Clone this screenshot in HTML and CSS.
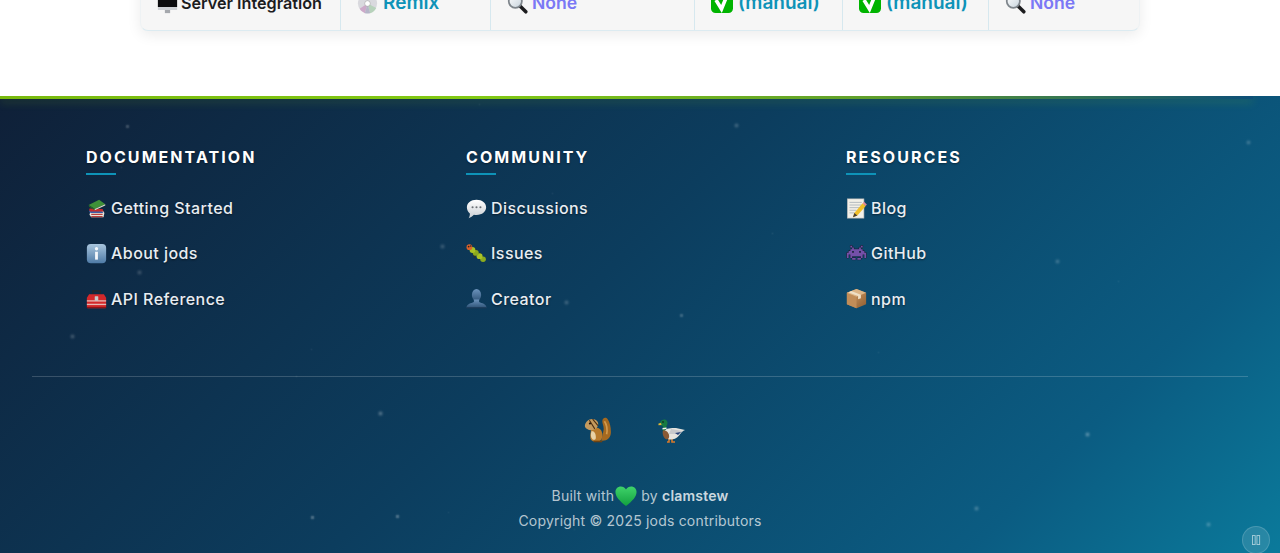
FILE: index.html
```html
<!DOCTYPE html>
<html lang="en">
<head>
<meta charset="utf-8">
<title>jods</title>
<link rel="stylesheet" href="styles.css">
</head>
<body>
<svg class="sprites" aria-hidden="true">
  <defs>
    <linearGradient id="g-info" x1="0" y1="0" x2="0" y2="1"><stop offset="0" stop-color="#a9c6de"/><stop offset="1" stop-color="#4f7ba6"/></linearGradient>
    <linearGradient id="g-bust" x1="0" y1="0" x2="0" y2="1"><stop offset="0" stop-color="#6d94bd"/><stop offset="1" stop-color="#2f5478"/></linearGradient>
    <linearGradient id="g-bubble" x1="0" y1="0" x2="0" y2="1"><stop offset="0" stop-color="#ffffff"/><stop offset="1" stop-color="#c9ced3"/></linearGradient>
    <linearGradient id="g-box" x1="0" y1="0" x2="1" y2="1"><stop offset="0" stop-color="#d9a66f"/><stop offset="1" stop-color="#8f5d30"/></linearGradient>
    <linearGradient id="g-heart" x1="0" y1="0" x2="0" y2="1"><stop offset="0" stop-color="#3fd36a"/><stop offset="1" stop-color="#12a03e"/></linearGradient>
    <linearGradient id="g-lens" x1="0" y1="0" x2="1" y2="1"><stop offset="0" stop-color="#ffffff"/><stop offset="1" stop-color="#c7d3dc"/></linearGradient>
  </defs>
  <symbol id="i-monitor" viewBox="0 0 24 24"><rect x="1" y="1" width="22" height="15" fill="#0c0c0e"/><rect x="1" y="16" width="22" height="3.4" fill="#cfd2d6"/><rect x="9" y="19.4" width="6" height="3.6" fill="#a5a8ad"/></symbol>
  <symbol id="i-disc" viewBox="0 0 24 24"><circle cx="12" cy="12" r="11" fill="#d9d9de"/><path d="M12 12 3 18a11 11 0 0 0 6 5z" fill="#cda9c9"/><path d="M12 12 22 17a11 11 0 0 1-7 6z" fill="#b7d2bb"/><path d="M12 12 9 23a11 11 0 0 0 6 0z" fill="#b5b5c8"/><circle cx="12" cy="12" r="3.2" fill="#fff" stroke="#999" stroke-width=".6"/></symbol>
  <symbol id="i-search" viewBox="0 0 24 24"><path d="M14 14l7.5 7.5" stroke="#1c1c1e" stroke-width="4" stroke-linecap="round"/><circle cx="9.5" cy="9.5" r="7.5" fill="url(#g-lens)" stroke="#7e858b" stroke-width="2"/></symbol>
  <symbol id="i-check" viewBox="1 1 22 22"><rect x="1" y="1" width="22" height="22" rx="4.5" fill="#00b400"/><path d="M6 10l5.5 9L18 3" fill="none" stroke="#fff" stroke-width="3.6"/></symbol>
  <symbol id="i-books" viewBox="0 0 24 24"><path d="M5 15h15l1 2-1 5H6l-2-3z" fill="#e9e4da"/><path d="M4 14l14 1 2 2H6c-2 0-3-1-2-3z" fill="#3a5ea8"/><path d="M4 12l15 .5 1 3H7c-3 0-4-1-3-3.500z" fill="#c22a2a"/><path d="M6 18h13v1.500H6zM6 20.500h13V22H6z" fill="#b5403f"/><path d="M3 8l12-6 7 5-12 5.500z" fill="#3f9138"/><path d="M3 8l7 4.500V14L3.500 10z" fill="#25662a"/><path d="M10 12.500l12-5.500v1.600L10 14z" fill="#d8dcc8"/></symbol>
  <symbol id="i-info" viewBox="0 0 24 24"><rect x="1" y="1" width="22" height="22" rx="4.500" fill="url(#g-info)"/><rect x="10.400" y="10" width="3.200" height="9" fill="#f4f8fb"/><circle cx="12" cy="6.600" r="1.900" fill="#f4f8fb"/></symbol>
  <symbol id="i-toolbox" viewBox="0 0 24 24"><path d="M8 7V3.500h8V7" fill="none" stroke="#27272a" stroke-width="1.600"/><path d="M3.500 7h17L23 11v11a1 1 0 0 1-1 1H2a1 1 0 0 1-1-1V11z" fill="#d4282a"/><rect x="1" y="14" width="22" height="1.500" fill="#e6b9b4"/><rect x="1" y="18" width="22" height="1.500" fill="#e6b9b4"/><rect x="10" y="9.500" width="4" height="5" rx=".6" fill="#c9c9c9"/><rect x="1" y="21.600" width="22" height="1.400" fill="#8c1416"/></symbol>
  <symbol id="i-bubble" viewBox="0 0 24 24"><path d="M12 2c6.500 0 11 3.700 11 8.700s-4.500 8.800-11 8.800c-1 0-2 0-3-.3C7.500 21 5.500 22.500 3 23c1-1.400 1.500-3 1.400-5.300C2.300 16 1 13.600 1 10.700 1 5.700 5.500 2 12 2z" fill="url(#g-bubble)"/><circle cx="7.500" cy="10.500" r="1.200" fill="#6b7075"/><circle cx="12" cy="10.500" r="1.200" fill="#6b7075"/><circle cx="16.500" cy="10.500" r="1.200" fill="#6b7075"/></symbol>
  <symbol id="i-bug" viewBox="0 0 24 24"><path d="M7 8l3 9M11 7l4 10M16 11l4 9" stroke="#33311c" stroke-width="1.400"/><circle cx="19.500" cy="18.500" r="3.200" fill="#8cab1e"/><circle cx="15.500" cy="15" r="3.400" fill="#a9c326"/><circle cx="11.200" cy="11.300" r="3.400" fill="#8cab1e"/><circle cx="7.400" cy="8" r="3.300" fill="#a9c326"/><circle cx="3.900" cy="4.800" r="3.300" fill="#d9622b"/><circle cx="3" cy="4" r="1" fill="#222"/><circle cx="5.500" cy="3.500" r=".9" fill="#222"/></symbol>
  <symbol id="i-bust" viewBox="0 0 24 24"><ellipse cx="12" cy="8" rx="5.300" ry="7" fill="url(#g-bust)"/><path d="M9 13h6v3c3 1.500 8 2 8.500 6.500H.5C1 18 6 17.500 9 16z" fill="url(#g-bust)"/><rect x=".5" y="22" width="23" height="1.300" fill="#1d3a57"/></symbol>
  <symbol id="i-memo" viewBox="0 0 24 24"><rect x="1.500" y="1" width="19" height="22" fill="#f2f0e8" stroke="#b4b6b4" stroke-width=".7"/><path d="M4 5h14M4 8h14M4 11h12M4 14h8M4 17h6" stroke="#b3b9be" stroke-width="1.100"/><path d="M8 22l1.500-5L19 6l3.500 3-9.500 11z" fill="#f0bf2a"/><path d="M19 6l1.500-1.700 3.300 3-1.300 1.700z" fill="#e78c9a"/><path d="M8 22l1.500-5 3.500 3z" fill="#4a4033"/></symbol>
  <symbol id="i-alien" viewBox="-.5 -1.500 12 12"><path d="M2 0h1v1H2zM8 0h1v1H8zM3 1h1v1H3zM7 1h1v1H7zM2 2h7v1H2zM1 3h2v1H1zM4 3h3v1H4zM8 3h2v1H8zM0 4h11v1H0zM0 5h1v2H0zM2 5h7v1H2zM2 6h1v1H2zM8 6h1v1H8zM10 5h1v2h-1zM3 7h2v1H3zM6 7h2v1H6z" fill="#7450a8" stroke="#1e1a2c" stroke-width=".5" paint-order="stroke"/></symbol>
  <symbol id="i-box" viewBox="0 0 24 24"><path d="M12 1l11 4.500v13L12 23 1 18.500v-13z" fill="url(#g-box)"/><path d="M1 5.500L12 10v13L1 18.500z" fill="#c18d58"/><path d="M1 5.500L12 1l11 4.500L12 10z" fill="#dcb587"/><path d="M6 3.300l11 4.500v4l-3.200 1V9.200L3 5z" fill="#efe0c6"/></symbol>
  <symbol id="i-chipmunk" viewBox="1 2 26 26"><path d="M17 24c5 .5 9-2 9-8 0-5-1-9-3-12-2-2.500-5-1-5 2 0 3 2 5 1 9z" fill="#a5691f"/><path d="M20 6c2 3 3 7 2 12" fill="none" stroke="#d29a4c" stroke-width="1.500"/><path d="M8 13c2-2 7-2 9 1.500 2 3.500 1 8-1 9.500-3 1.500-8 1.500-9-2-.5-2 0-6 1-9z" fill="#b77a2b"/><path d="M8 15c-1 3-1 6 1 8 2 .5 3 0 3-2 0-3-1-6-4-6z" fill="#e9d2a5"/><path d="M2 9c1-3 4-6 8-5 3 .5 5 3 4 6-1 3.500-5 5-8 4-2-.5-5-2-4-5z" fill="#c49a5e"/><path d="M6 5l5 8M9 4l5 6" stroke="#4c2e10" stroke-width="1"/><circle cx="6.500" cy="8" r="1" fill="#1a1009"/><path d="M10 24h8v1.500h-8z" fill="#6e4313"/></symbol>
  <symbol id="i-duck" viewBox="0 0 28 28"><path d="M11 22v3h-2M14 22v3h3" stroke="#d97a2a" stroke-width="1.600" fill="none"/><path d="M6 14c2-3 7-3 12-3l9 2-4 2c-1 4-6 8-11 7.500-4-.5-7-4-6-8.500z" fill="#e5e4df"/><path d="M13 12l12 2-3 3H11z" fill="#c7c9cc"/><path d="M17 16l6-1-3 3z" fill="#27427a"/><path d="M5 13c-1 3 0 7 2.500 9 3 1 4-1 3.500-4-.5-2.500-3-5-6-5z" fill="#8a5a35"/><path d="M2 5.500C3 3 6 2 8 3c2 1.500 2 4 .5 6L8 13l-3.500.5L5 9C3.500 8.500 2 8 0 8z" fill="#167a42"/><path d="M4.500 11l4-.5v1.500l-4 .5z" fill="#f4f4f0"/><path d="M.5 6.500L3 6l.5 2L.5 8.300z" fill="#e6b23a"/><circle cx="5" cy="5" r=".8" fill="#111"/></symbol>
  <symbol id="i-heart" viewBox="0 0 24 24"><path d="M12 23C5 17 .5 13 .5 7.500.5 3.800 3.300 1.500 6.300 1.500 8.700 1.500 10.800 2.800 12 5c1.200-2.200 3.300-3.500 5.700-3.500 3 0 5.800 2.300 5.800 6C23.500 13 19 17 12 23z" fill="url(#g-heart)"/></symbol>
</svg>

<div class="page">
  <section class="content">
    <div class="compare-row">
      <div class="cell cell-label"><svg class="cell-icon"><use href="#i-monitor"/></svg>Server Integration</div>
      <div class="cell cell-link"><svg class="cell-icon"><use href="#i-disc"/></svg>Remix</div>
      <div class="cell cell-none"><svg class="cell-icon"><use href="#i-search"/></svg>None</div>
      <div class="cell cell-link"><svg class="cell-icon cell-icon-check"><use href="#i-check"/></svg>(manual)</div>
      <div class="cell cell-link"><svg class="cell-icon cell-icon-check"><use href="#i-check"/></svg>(manual)</div>
      <div class="cell cell-none"><svg class="cell-icon"><use href="#i-search"/></svg>None</div>
    </div>
  </section>

  <footer class="footer">
    <div class="footer-bar"></div>
    <div class="footer-columns">
      <nav class="footer-col">
        <h3 class="footer-title">Documentation</h3>
        <ul class="footer-list">
          <li><a class="footer-link" href="#"><svg class="link-icon"><use href="#i-books"/></svg>Getting Started</a></li>
          <li><a class="footer-link" href="#"><svg class="link-icon"><use href="#i-info"/></svg>About jods</a></li>
          <li><a class="footer-link" href="#"><svg class="link-icon"><use href="#i-toolbox"/></svg>API Reference</a></li>
        </ul>
      </nav>
      <nav class="footer-col">
        <h3 class="footer-title">Community</h3>
        <ul class="footer-list">
          <li><a class="footer-link" href="#"><svg class="link-icon"><use href="#i-bubble"/></svg>Discussions</a></li>
          <li><a class="footer-link" href="#"><svg class="link-icon"><use href="#i-bug"/></svg>Issues</a></li>
          <li><a class="footer-link" href="#"><svg class="link-icon"><use href="#i-bust"/></svg>Creator</a></li>
        </ul>
      </nav>
      <nav class="footer-col">
        <h3 class="footer-title">Resources</h3>
        <ul class="footer-list">
          <li><a class="footer-link" href="#"><svg class="link-icon"><use href="#i-memo"/></svg>Blog</a></li>
          <li><a class="footer-link" href="#"><svg class="link-icon"><use href="#i-alien"/></svg>GitHub</a></li>
          <li><a class="footer-link" href="#"><svg class="link-icon"><use href="#i-box"/></svg>npm</a></li>
        </ul>
      </nav>
    </div>

    <div class="footer-bottom">
      <div class="mascots">
        <svg class="mascot"><use href="#i-chipmunk"/></svg>
        <svg class="mascot"><use href="#i-duck"/></svg>
      </div>
      <p class="built">Built with<svg class="heart"><use href="#i-heart"/></svg> by <strong class="author">clamstew</strong></p>
      <p class="copyright">Copyright © 2025 jods contributors</p>
    </div>

    <div class="stars" aria-hidden="true"></div>
    <button class="pause" type="button" aria-label="Pause animation">
      <svg viewBox="0 0 10 12" class="pause-icon"><rect x=".5" y=".5" width="3" height="10"/><rect x="5.500" y=".5" width="3" height="10"/></svg>
    </button>
  </footer>
</div>
</body>
</html>
```

FILE: styles.css
```css
* { box-sizing: border-box; }

html, body {
  margin: 0;
  height: 100%;
  overflow: hidden;
  background: #fff;
}

body {
  font-family: Inter, "Liberation Sans", sans-serif;
}

.sprites {
  position: absolute;
  width: 0;
  height: 0;
}

.page {
  height: 553px;
  display: flex;
  flex-direction: column;
}

/* Comparison table, scrolled so only its last row's bottom shows */
.content {
  height: 96px;
  flex: none;
  display: flex;
  flex-direction: column;
  justify-content: flex-end;
  align-items: center;
  padding-bottom: 65px;
}

.compare-row {
  width: 1000px;
  flex: none;
  display: grid;
  grid-template-columns: 199px 150px 204px 148px 146px 151px;
  background: #f6f6f6;
  border-radius: 0 0 8px 8px;
  border: 1px solid #eef2f4;
  border-bottom-color: #dcebf1;
  border-top: 0;
  box-shadow: 0 4px 14px rgba(0, 0, 0, 0.08);
}

.cell {
  display: flex;
  align-items: center;
  gap: 5px;
  padding: 16px 0 15px 16px;
  line-height: 24px;
  font-size: 19px;
  font-weight: 600;
  white-space: nowrap;
  border-left: 1px solid #d6e8ef;
}

.cell:first-child { border-left: 0; }

.cell-label { font-size: 16.2px; color: #1c1c1e; gap: 3px; }
.cell-link { color: #0e93b8; }
.cell-none { color: #7b78f5; font-size: 17.6px; gap: 4px; }

.cell-icon { width: 21px; height: 21px; flex: none; }
.cell-icon-check { width: 22px; height: 22px; margin-top: -2px; }

/* Footer */
.footer {
  position: relative;
  flex: 1;
  overflow: hidden;
  color: #fff;
  background: linear-gradient(135deg, #0f2038 0%, #0c3d5e 45%, #0b5c82 82%, #0b7a9b 100%);
}

.footer-bar {
  height: 3px;
  width: 1253px;
  background: linear-gradient(90deg, #78b90e 0%, #82c914 38%, #5f9e2c 70%, #0d4f78 100%);
  box-shadow: 0 3px 9px rgba(130, 200, 20, 0.28);
}

.footer-columns {
  display: grid;
  grid-template-columns: repeat(3, 380px);
  padding: 49px 0 0 86px;
}

.footer-title {
  margin: 0 0 21px;
  padding-bottom: 8px;
  font-size: 16px;
  line-height: 19px;
  font-weight: 700;
  letter-spacing: 2.05px;
  text-transform: uppercase;
  text-shadow: 0 1px 2px rgba(0, 0, 0, 0.4);
  background: linear-gradient(#0e93b8, #0e93b8) left bottom / 30px 2px no-repeat;
}

.footer-list {
  list-style: none;
  margin: 0;
  padding: 0;
  display: flex;
  flex-direction: column;
  gap: 21.4px;
}

.footer-link {
  display: flex;
  align-items: center;
  gap: 4px;
  height: 24px;
  color: #e8edf2;
  font-size: 16px;
  font-weight: 500;
  letter-spacing: 0.45px;
  text-decoration: none;
  text-shadow: 0 1px 2px rgba(0, 0, 0, 0.5);
}

.link-icon { width: 21px; height: 21px; flex: none; }

.footer-bottom {
  margin: 65px 32px 0;
  border-top: 1px solid rgba(255, 255, 255, 0.18);
  display: flex;
  flex-direction: column;
  align-items: center;
}

.mascots {
  display: flex;
  gap: 46px;
  margin: 40px 0 38px;
  padding-right: 10px;
}

.mascot { width: 28px; height: 28px; }

.built,
.copyright {
  margin: 0;
  font-size: 14px;
  letter-spacing: 0.2px;
  color: rgba(255, 255, 255, 0.7);
  line-height: 25px;
}

.built {
  display: flex;
  align-items: center;
  white-space: pre;
}

.author { font-weight: 600; color: rgba(255, 255, 255, 0.8); }

.heart { width: 22px; height: 22px; margin: 2px .5px 0; }

/* Star field sits above everything as a decorative overlay */
.stars {
  position: absolute;
  left: 0;
  top: 0;
  width: 1px;
  height: 1px;
  pointer-events: none;
  box-shadow:
    127px 30px 2px 1px rgba(255,255,255,.22),
    121px 71px 2px 0 rgba(255,255,255,.2),
    139px 176px 3px 1px rgba(255,255,255,.28),
    72px 240px 3px 1px rgba(255,255,255,.3),
    311px 253px 2px 0 rgba(255,255,255,.22),
    296px 280px 2px 0 rgba(255,255,255,.2),
    380px 317px 3px 1px rgba(255,255,255,.42),
    312px 421px 2px 1px rgba(255,255,255,.3),
    397px 420px 2px 1px rgba(255,255,255,.3),
    448px 416px 2px 0 rgba(255,255,255,.18),
    479px 8px 2px 0 rgba(255,255,255,.18),
    549px 70px 2px 0 rgba(255,255,255,.18),
    552px 97px 2px 0 rgba(255,255,255,.2),
    442px 150px 3px 1px rgba(255,255,255,.28),
    736px 29px 3px 1px rgba(255,255,255,.3),
    772px 137px 2px 0 rgba(255,255,255,.25),
    566px 206px 3px 1px rgba(255,255,255,.3),
    681px 219px 2px 1px rgba(255,255,255,.22),
    574px 433px 2px 0 rgba(255,255,255,.2),
    1248px 46px 3px 1px rgba(255,255,255,.3),
    1057px 165px 3px 1px rgba(255,255,255,.3),
    1118px 185px 2px 0 rgba(255,255,255,.22),
    878px 256px 2px 0 rgba(255,255,255,.2),
    1087px 338px 3px 1px rgba(255,255,255,.45),
    976px 412px 3px 1px rgba(255,255,255,.35),
    1208px 428px 3px 1px rgba(255,255,255,.35);
}

.pause {
  position: absolute;
  right: 10px;
  bottom: -1px;
  width: 28px;
  height: 28px;
  padding: 0;
  display: flex;
  align-items: center;
  justify-content: center;
  border-radius: 50%;
  border: 1px solid rgba(255, 255, 255, 0.15);
  background: rgba(255, 255, 255, 0.12);
}

.pause-icon {
  width: 9px;
  height: 11px;
  fill: none;
  stroke: rgba(255, 255, 255, 0.6);
  stroke-width: 1;
}
```
